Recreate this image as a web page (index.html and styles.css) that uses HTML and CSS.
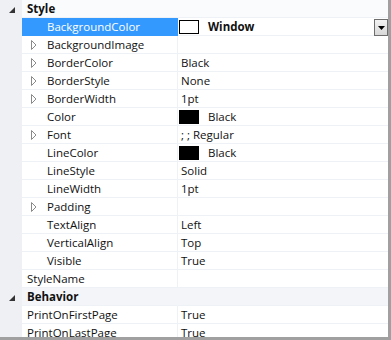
FILE: index.html
```html
<!DOCTYPE html>
<html>
<head>
<meta charset="utf-8">
<link rel="stylesheet" href="styles.css">
</head>
<body>
<div class="grid">
  <div class="row cat cat-first">
    <div class="gutter"><svg class="cat-arrow" width="6" height="6" viewBox="0 0 6 6"><polygon points="6,0 6,6 0,6"/></svg></div>
    <div class="name cat-name">Style</div>
    <div class="value"></div>
  </div>
  <div class="row selected">
    <div class="gutter"></div>
    <div class="name sub">BackgroundColor</div>
    <div class="value"><span class="swatch white"></span><span class="bold">Window</span><span class="dd"><svg width="7" height="4" viewBox="0 0 7 4"><polygon points="0,0 7,0 3.5,4"/></svg></span></div>
  </div>
  <div class="row">
    <div class="gutter"></div>
    <div class="name sub exp"><svg class="exp-arrow" width="6" height="10" viewBox="0 0 6 10"><polygon points="0.5,0.5 5,5 0.5,9.5"/></svg>BackgroundImage</div>
    <div class="value"></div>
  </div>
  <div class="row">
    <div class="gutter"></div>
    <div class="name sub exp"><svg class="exp-arrow" width="6" height="10" viewBox="0 0 6 10"><polygon points="0.5,0.5 5,5 0.5,9.5"/></svg>BorderColor</div>
    <div class="value">Black</div>
  </div>
  <div class="row">
    <div class="gutter"></div>
    <div class="name sub exp"><svg class="exp-arrow" width="6" height="10" viewBox="0 0 6 10"><polygon points="0.5,0.5 5,5 0.5,9.5"/></svg>BorderStyle</div>
    <div class="value">None</div>
  </div>
  <div class="row">
    <div class="gutter"></div>
    <div class="name sub exp"><svg class="exp-arrow" width="6" height="10" viewBox="0 0 6 10"><polygon points="0.5,0.5 5,5 0.5,9.5"/></svg>BorderWidth</div>
    <div class="value">1pt</div>
  </div>
  <div class="row">
    <div class="gutter"></div>
    <div class="name sub">Color</div>
    <div class="value"><span class="swatch black"></span>Black</div>
  </div>
  <div class="row">
    <div class="gutter"></div>
    <div class="name sub exp"><svg class="exp-arrow" width="6" height="10" viewBox="0 0 6 10"><polygon points="0.5,0.5 5,5 0.5,9.5"/></svg>Font</div>
    <div class="value">; ; Regular</div>
  </div>
  <div class="row">
    <div class="gutter"></div>
    <div class="name sub">LineColor</div>
    <div class="value"><span class="swatch black"></span>Black</div>
  </div>
  <div class="row">
    <div class="gutter"></div>
    <div class="name sub">LineStyle</div>
    <div class="value">Solid</div>
  </div>
  <div class="row">
    <div class="gutter"></div>
    <div class="name sub">LineWidth</div>
    <div class="value">1pt</div>
  </div>
  <div class="row">
    <div class="gutter"></div>
    <div class="name sub exp"><svg class="exp-arrow" width="6" height="10" viewBox="0 0 6 10"><polygon points="0.5,0.5 5,5 0.5,9.5"/></svg>Padding</div>
    <div class="value"></div>
  </div>
  <div class="row">
    <div class="gutter"></div>
    <div class="name sub">TextAlign</div>
    <div class="value">Left</div>
  </div>
  <div class="row">
    <div class="gutter"></div>
    <div class="name sub">VerticalAlign</div>
    <div class="value">Top</div>
  </div>
  <div class="row">
    <div class="gutter"></div>
    <div class="name sub">Visible</div>
    <div class="value">True</div>
  </div>
  <div class="row">
    <div class="gutter"></div>
    <div class="name">StyleName</div>
    <div class="value"></div>
  </div>
  <div class="row cat">
    <div class="gutter"><svg class="cat-arrow" width="6" height="6" viewBox="0 0 6 6"><polygon points="6,0 6,6 0,6"/></svg></div>
    <div class="name cat-name">Behavior</div>
    <div class="value"></div>
  </div>
  <div class="row">
    <div class="gutter"></div>
    <div class="name">PrintOnFirstPage</div>
    <div class="value">True</div>
  </div>
  <div class="row">
    <div class="gutter"></div>
    <div class="name">PrintOnLastPage</div>
    <div class="value">True</div>
  </div>
</div>
</body>
</html>
```
FILE: styles.css
```css
html, body {
  margin: 0;
  padding: 0;
  background: #ffffff;
}
.grid {
  width: 388px;
  height: 337px;
  border-right: 3px solid #a0a0a0;
  border-bottom: 3px solid #a0a0a0;
  overflow: hidden;
  background: #ffffff;
  font-family: "Open Sans", "Noto Sans", sans-serif;
  font-size: 11.5px;
  color: #111111;
  display: flex;
  flex-direction: column;
}
.row {
  display: flex;
  height: 18px;
  flex: 0 0 18px;
}
.gutter {
  width: 22px;
  flex: 0 0 22px;
  background: #eef0f3;
  display: flex;
  align-items: center;
  justify-content: center;
}
.cat-arrow {
  fill: #333333;
  margin-left: 2px;
  margin-top: 1px;
}
.name {
  width: 150px;
  flex: 0 0 150px;
  padding-left: 5px;
  border-bottom: 1px solid #eef1f6;
  border-right: 1px solid #eef1f6;
  display: flex;
  align-items: center;
  white-space: nowrap;
  line-height: 17px;
}
.name.sub {
  padding-left: 25px;
  width: 130px;
  flex-basis: 130px;
}
.exp {
  position: relative;
}
.exp-arrow {
  position: absolute;
  left: 9px;
  top: 4px;
  fill: none;
  stroke: #8a8a8a;
  stroke-width: 1;
}
.value {
  flex: 1;
  padding-left: 3px;
  border-bottom: 1px solid #eef1f6;
  display: flex;
  align-items: center;
  white-space: nowrap;
  line-height: 17px;
}
.cat .name, .cat .value {
  background: #f3f5f9;
  border-right-color: #f3f5f9;
}
.cat-first .name, .cat-first .value {
  background: #fafbfd;
  border-right-color: #fafbfd;
}
.cat-name {
  font-weight: bold;
}
.selected .name {
  background: #3399ff;
  color: #ffffff;
  border-bottom-color: #3399ff;
  border-right-color: #3399ff;
}
.selected .value {
  padding-left: 1px;
}
.swatch {
  display: inline-block;
  width: 20px;
  height: 14px;
  box-sizing: border-box;
  margin-left: -2px;
  margin-right: 9px;
}
.swatch.black {
  background: #000000;
}
.swatch.white {
  background: #ffffff;
  border: 1px solid #000000;
  margin-left: 0;
}
.bold {
  font-weight: bold;
}
.dd {
  margin-left: auto;
  width: 14px;
  height: 17px;
  box-sizing: border-box;
  border: 1px solid #6e6e6e;
  background: linear-gradient(#f2f2f2, #d8d8d8);
  display: flex;
  align-items: center;
  justify-content: center;
  align-self: flex-start;
  margin-top: 1px;
}
.dd svg {
  fill: #000000;
  margin-top: 1px;
}
```
